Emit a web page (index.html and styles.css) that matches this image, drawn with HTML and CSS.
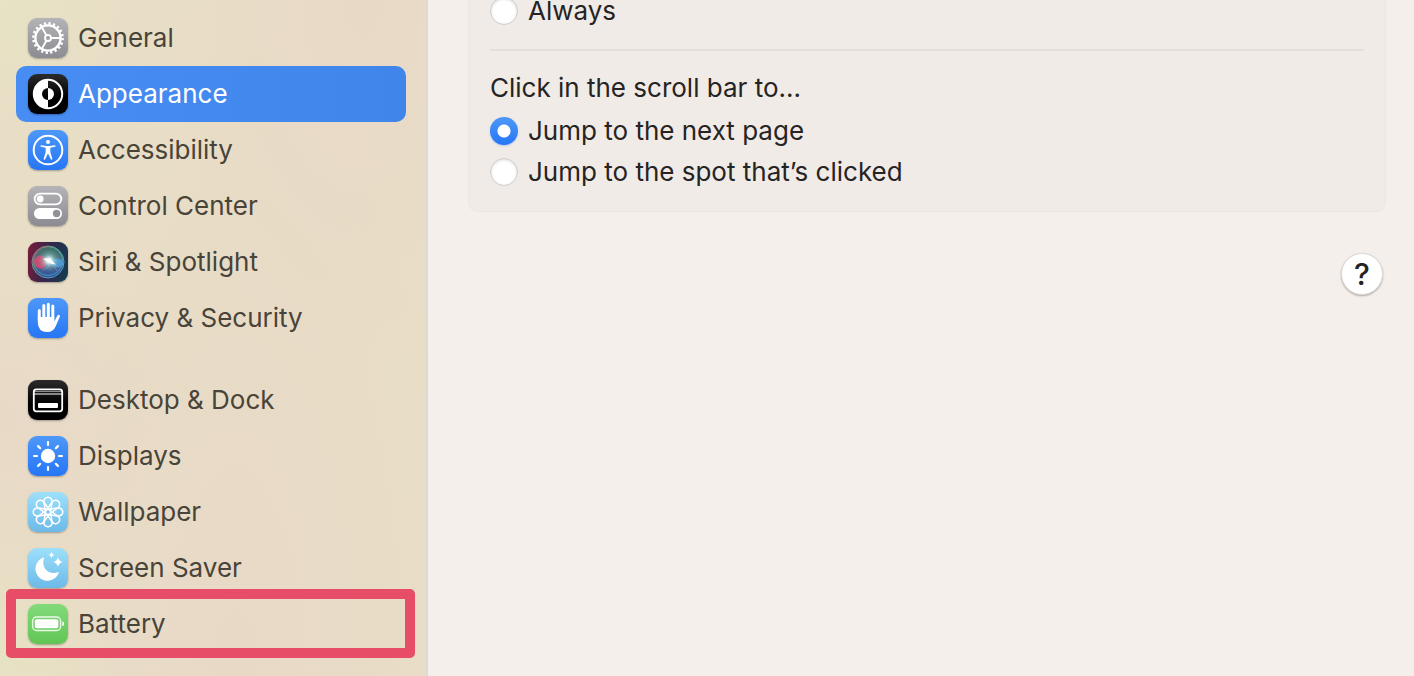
FILE: index.html
```html
<!DOCTYPE html>
<html lang="en">
<head>
    <meta charset="UTF-8">
    <meta name="viewport" content="width=device-width, initial-scale=1.0">
    <title>Appearance</title>
    <link rel="stylesheet" href="styles.css">
</head>
<body>
    <nav class="sidebar">
        <ul>
            <li><a href="#general">
                <svg class="icon gray" viewBox="0 0 40 40" fill="none" stroke="#fff">
                    <circle cx="20" cy="20" r="14.6" stroke-width="2.6" stroke-dasharray="2.2 2.387"/>
                    <circle cx="20" cy="20" r="12.6" stroke-width="2.3"/>
                    <circle cx="20" cy="20" r="3" stroke-width="1.9"/>
                    <path d="M23 20h9.500M18.500 17.400l-4.800-8.300M18.500 22.600l-4.800 8.300" stroke-width="1.900"/>
                </svg>
                <span>General</span>
            </a></li>
            <li><a href="#appearance" class="selected" aria-current="page">
                <svg class="icon black" viewBox="0 0 40 40">
                    <circle cx="20" cy="20" r="14.200" fill="none" stroke="#fff" stroke-width="2"/>
                    <path d="M20 5.500a14.500 14.500 0 0 0 0 29v-8.500a6 6 0 0 1 0-12z" fill="#fff"/>
                    <path d="M20 14a6 6 0 0 1 0 12z" fill="#fff"/>
                </svg>
                <span>Appearance</span>
            </a></li>
            <li><a href="#accessibility">
                <svg class="icon blue" viewBox="0 0 40 40">
                    <circle cx="20" cy="20" r="14.300" fill="none" stroke="#fff" stroke-width="2"/>
                    <circle cx="20" cy="12" r="2" fill="#fff"/>
                    <path d="M13.300 15.200l5 .8h3.400l5-.8q.9 0 .9.800 0 .6-.7.800l-4.600 1v4.200l2 6.600q.2.900-.5 1.100-.7.200-1.100-.6L20.300 24h-.6l-2.400 5.100q-.4.800-1.100.6-.7-.2-.5-1.100l2-6.600v-4.200l-4.600-1q-.7-.2-.7-.8 0-.8.900-.8z" fill="#fff"/>
                </svg>
                <span>Accessibility</span>
            </a></li>
            <li><a href="#control-center">
                <svg class="icon gray" viewBox="0 0 40 40">
                    <rect x="6.700" y="7.700" width="26.600" height="10.600" rx="5.300" fill="none" stroke="#fff" stroke-width="1.800"/>
                    <circle cx="12.200" cy="13" r="3.400" fill="#fff"/>
                    <rect x="6" y="22" width="28" height="11" rx="5.500" fill="#fff"/>
                    <circle cx="28.600" cy="27.500" r="3.700" fill="#919196"/>
                </svg>
                <span>Control Center</span>
            </a></li>
            <li><a href="#siri">
                <svg class="icon siri" viewBox="0 0 40 40">
                    <defs>
                        <radialGradient id="glow">
                            <stop offset="0" stop-color="#fff"/>
                            <stop offset=".2" stop-color="#e9fffb" stop-opacity=".9"/>
                            <stop offset=".5" stop-color="#9fdcd2" stop-opacity=".45"/>
                            <stop offset="1" stop-color="#5a9c98" stop-opacity="0"/>
                        </radialGradient>
                        <linearGradient id="orb" x1="0" y1="0" x2="0" y2="1">
                            <stop offset="0" stop-color="#3f8a70"/>
                            <stop offset=".5" stop-color="#5c7f90"/>
                            <stop offset="1" stop-color="#2f62bd"/>
                        </linearGradient>
                        <linearGradient id="ring" x1="0" y1="0" x2="1" y2="1">
                            <stop offset="0" stop-color="#c95378"/>
                            <stop offset=".4" stop-color="#55b08f"/>
                            <stop offset="1" stop-color="#4a97e6"/>
                        </linearGradient>
                    </defs>
                    <circle cx="20" cy="20" r="15.500" fill="url(#orb)" opacity=".75"/>
                    <ellipse cx="29" cy="21" rx="6.500" ry="4.500" fill="#4f9de0" opacity=".85"/>
                    <ellipse cx="12.500" cy="20" rx="6.500" ry="6.500" fill="#dc4772" opacity=".9"/>
                    <path d="M14 28c4-1 8-4 10-8l5 9" fill="none" stroke="#9b7cc4" stroke-width="1" opacity=".7"/>
                    <circle cx="21" cy="18.500" r="12" fill="url(#glow)"/>
                    <path d="M15 17q4-1.500 7.500.5l5.500 5q-4.500 0-7.500-2.500z" fill="#fff"/>
                    <circle cx="20" cy="20" r="16" fill="none" stroke="url(#ring)" stroke-width="1"/>
                    <circle cx="20" cy="19" r="14.500" fill="none" stroke="url(#ring)" stroke-width=".8"/>
                </svg>
                <span>Siri &amp; Spotlight</span>
            </a></li>
            <li><a href="#privacy">
                <svg class="icon blue" viewBox="0 0 40 40" fill="none" stroke="#fff" stroke-linecap="round">
                    <path d="M11.300 22V12.500M15.800 20V7.500M20.300 19V6.300M24.800 21V8" stroke-width="3"/>
                    <path d="M9.800 19h16.500v4.500l3-5.700q.8-1.500 2-.8 1 .6.400 2l-3.900 9q-2.500 6-8.500 6-9.500 0-9.500-10z" fill="#fff" stroke="none"/>
                </svg>
                <span>Privacy &amp; Security</span>
            </a></li>
        </ul>
        <ul>
            <li><a href="#desktop">
                <svg class="icon black" viewBox="0 0 40 40">
                    <rect x="5.800" y="9.300" width="28.400" height="22" rx="2.500" fill="none" stroke="#fff" stroke-width="1.800"/>
                    <path d="M6 11.500h28" stroke="#fff" stroke-opacity=".5"/>
                    <path d="M6 14h28" stroke="#fff" stroke-width="1.200"/>
                    <rect x="10" y="23" width="20" height="5" rx="1" fill="#fff"/>
                </svg>
                <span>Desktop &amp; Dock</span>
            </a></li>
            <li><a href="#displays">
                <svg class="icon blue" viewBox="0 0 40 40">
                    <circle cx="20" cy="20" r="7.200" fill="#fff"/>
                    <path d="M20 6v3M20 31v3M6 20h3M31 20h3M10.100 10.100l2.100 2.100M27.800 27.800l2.100 2.100M10.100 29.900l2.100-2.100M27.800 12.200l2.100-2.100" stroke="#fff" stroke-width="2.200" stroke-linecap="round"/>
                </svg>
                <span>Displays</span>
            </a></li>
            <li><a href="#wallpaper">
                <svg class="icon sky" viewBox="0 0 40 40" fill="none" stroke="#fff" stroke-width="1.500">
                    <path id="petal" d="M17.600 21L16 10.200a4.100 4.100 0 1 1 8 0L22.400 21"/>
                    <use href="#petal" transform="rotate(45 20 20)"/>
                    <use href="#petal" transform="rotate(90 20 20)"/>
                    <use href="#petal" transform="rotate(135 20 20)"/>
                    <use href="#petal" transform="rotate(180 20 20)"/>
                    <use href="#petal" transform="rotate(225 20 20)"/>
                    <use href="#petal" transform="rotate(270 20 20)"/>
                    <use href="#petal" transform="rotate(315 20 20)"/>
                    <circle cx="20" cy="20" r="1.500" fill="#7dc3ee" stroke="none"/>
                </svg>
                <span>Wallpaper</span>
            </a></li>
            <li><a href="#screen-saver">
                <svg class="icon sky" viewBox="0 0 40 40" fill="#fff">
                    <path d="M15.500 9.400q.9-.2.500.9c-3.300 9 4.500 17.200 13.800 14 1-.3 1.200.1.800.9A12 12 0 1 1 15.500 9.400z"/>
                    <path d="M30 9q.8 4.200 5 5-4.200.8-5 5-.8-4.200-5-5 4.200-.8 5-5zM23.500 4q.5 2.500 3 3-2.500.5-3 3-.5-2.500-3-3 2.500-.5 3-3z"/>
                </svg>
                <span>Screen Saver</span>
            </a></li>
            <li><a href="#battery" class="marked">
                <svg class="icon green" viewBox="0 0 40 40">
                    <rect x="4.600" y="13" width="28" height="13.500" rx="4" fill="none" stroke="#fff" stroke-opacity=".85" stroke-width="1.400"/>
                    <rect x="6.800" y="15.200" width="23.600" height="9" rx="2" fill="#fff"/>
                    <path d="M34.300 17.300q1.900.8 1.900 2.500t-1.900 2.500z" fill="#fff"/>
                </svg>
                <span>Battery</span>
            </a></li>
        </ul>
    </nav>

    <main>
        <form class="card">
            <label><input type="radio" name="show" value="always"><span>Always</span></label>
            <hr>
            <fieldset>
                <legend>Click in the scroll bar to...</legend>
                <label><input type="radio" name="click" value="page" checked><span>Jump to the next page</span></label>
                <label><input type="radio" name="click" value="spot"><span>Jump to the spot that’s clicked</span></label>
            </fieldset>
        </form>
        <button type="button" class="help" aria-label="Help">?</button>
    </main>
</body>
</html>
```

FILE: styles.css
```css
* {
    box-sizing: border-box;
}
body {
    margin: 0;
    min-height: 100vh;
    display: flex;
    overflow: hidden;
    font-family: Inter, "Liberation Sans", sans-serif;
    font-size: 26px;
    line-height: 32px;
    color: #262423;
    background: #f4efeb;
}

/* sidebar */
.sidebar {
    width: 428px;
    flex-shrink: 0;
    padding: 10px 20px 24px 16px;
    border-right: 2px solid #dfd9d3;
    background:
        radial-gradient(circle at 0 0, #e7e3c4, transparent 130px),
        radial-gradient(circle at 0 100%, #e7e2c3, transparent 120px),
        radial-gradient(ellipse at 85% 0, #e8d9c7, transparent 200px),
        radial-gradient(ellipse at 0 62%, #e8d9c7, transparent 180px),
        radial-gradient(ellipse at 55% 100%, #e8d9c7, transparent 240px),
        #e8dec6;
}
.sidebar ul {
    list-style: none;
    margin: 0;
    padding: 0;
}
.sidebar ul + ul {
    margin-top: 26px;
}
.sidebar a {
    position: relative;
    display: flex;
    align-items: center;
    gap: 10px;
    height: 56px;
    padding: 0 12px;
    border-radius: 10px;
    color: #484439;
    text-decoration: none;
}
.sidebar a.selected {
    color: #fff;
    background: linear-gradient(90deg, #488df3, #4085ea);
}
.sidebar a.marked::after {
    content: "";
    position: absolute;
    inset: -7px -9px -6px -10px;
    border: 10px solid #e84d67;
    border-radius: 5px;
}

/* icons */
.icon {
    width: 40px;
    height: 40px;
    flex-shrink: 0;
    border-radius: 9px;
    box-shadow: 0 1px 2px rgba(0, 0, 0, 0.3);
}
.gray {
    background: linear-gradient(#b4b3b8, #8c8b91);
}
.black {
    background: linear-gradient(#2b2b2b, #000 60%);
}
.blue {
    background: linear-gradient(#4d98f8, #2676f6);
}
.sky {
    background: linear-gradient(#9de0fa, #6cb9e9);
}
.green {
    background: linear-gradient(#83da7b, #60c654);
}
.siri {
    background: linear-gradient(100deg, #7a1c3a, #33264c 50%, #123f50);
}

/* content */
main {
    flex: 1;
    padding: 0 28px 0 40px;
}
.card {
    margin-top: -4px;
    padding: 0 21px 25px;
    border: 1px solid #ebe6e2;
    border-radius: 0 0 10px 10px;
    background: #f0ebe7;
}
.card hr {
    height: 2px;
    margin: 24px 0 21px;
    border: 0;
    background: #e4dfdb;
}
.card fieldset {
    margin: 0;
    padding: 0;
    border: 0;
}
.card legend {
    padding: 0;
}
.card label {
    display: flex;
    align-items: center;
    gap: 10px;
    height: 28px;
}
.card fieldset label {
    margin-top: 13px;
}
input[type="radio"] {
    appearance: none;
    width: 28px;
    height: 28px;
    margin: 0;
    border: 1px solid #cfcbc8;
    border-radius: 50%;
    background: #fff;
    box-shadow: inset 0 1px 3px rgba(0, 0, 0, 0.15);
}
input[type="radio"]:checked {
    border: 0;
    background: radial-gradient(circle, #fff 6px, transparent 7px), linear-gradient(#4d98f8, #2676f6);
    box-shadow: 0 1px 2px rgba(38, 118, 246, 0.3);
}
.help {
    display: block;
    width: 42px;
    height: 42px;
    margin: 41px 3px 0 auto;
    padding: 0;
    border: 1px solid #dedad7;
    border-radius: 50%;
    background: #fff;
    box-shadow: 0 1px 2px rgba(0, 0, 0, 0.3);
    font-family: inherit;
    font-size: 30px;
    font-weight: 500;
    line-height: 40px;
    color: #262423;
}
```
